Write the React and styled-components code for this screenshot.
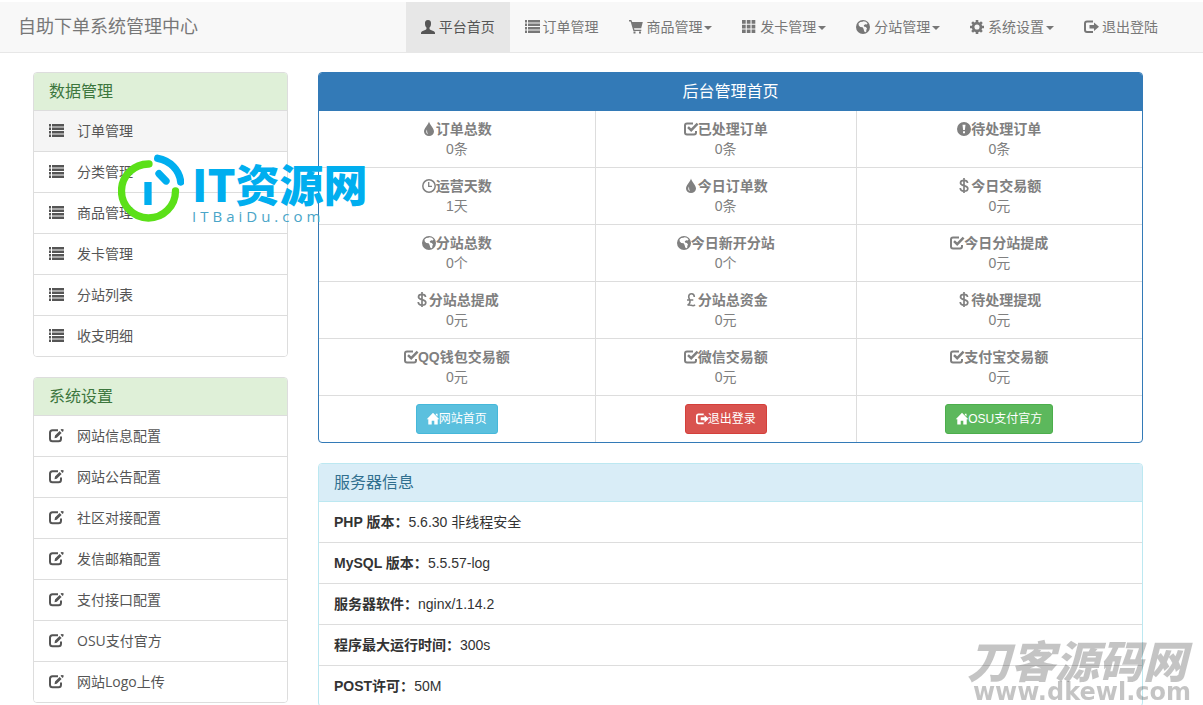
import React from 'react'
import styled, { createGlobalStyle, css } from 'styled-components';

const icons = {
    user: <path d="M7 0C4.700 0 3.800 1.600 4 3.900C4.100 5.500 4.700 6.800 5.500 7.500V8.700C5.500 9.200 5.200 9.500 4.700 9.700L1.200 11.300C.4 11.700 0 12.300 0 13V14H14V13C14 12.300 13.600 11.700 12.800 11.300L9.300 9.700C8.800 9.500 8.500 9.200 8.500 8.700V7.500C9.300 6.800 9.900 5.500 10 3.900C10.200 1.600 9.300 0 7 0z" />,
    list: <path d="M0 0h2v2.500H0zM3 0h12v2.500H3zM0 3.500h2V6H0zM3 3.500h12V6H3zM0 7h2v2.500H0zM3 7h12v2.500H3zM0 10.500h2V13H0zM3 10.500h12V13H3z" />,
    cart: <path d="M0 0H2.300L3.200 2H13.800L12.200 8.300H5L5.400 9.700H12.300V11H4.400L1.600 1.500H0zM4.500 11.500h2v2h-2zM10 11.500h2v2h-2z" />,
    th: <path d="M0 0h3.700v3.700H0zM4.800 0h3.700v3.700H4.800zM9.600 0h3.700v3.700H9.600zM0 4.700h3.700v3.700H0zM4.800 4.700h3.700v3.700H4.800zM9.600 4.700h3.700v3.700H9.600zM0 9.400h3.700v3.700H0zM4.800 9.400h3.700v3.700H4.800zM9.600 9.400h3.700v3.700H9.600z" />,
    globe: (
        <path
            fillRule="evenodd"
            d="M7 0a7 7 0 1 1 0 14A7 7 0 0 1 7 0zM7.700 1.300L6.400 1.800 4.300 2 2.500 3.600 2.800 5.500 4.300 6.900 6.600 7.300 7.500 8.700 8.300 11.500 9.200 12.300A5.800 5.800 0 0 0 10.300 11.500L10.300 9.900 11 8.500 9.900 7 8 6.600 7.800 5.300 9.400 4.300 10.900 4.400 11.500 3.300A5.800 5.800 0 0 0 7.700 1.300z"
        />
    ),
    cog: (
        <g fill="none" stroke="currentColor">
            <circle cx="7" cy="7" r="3.9" strokeWidth="2.7" />
            <path strokeWidth="2.6" d="M7 0v2.500M7 11.500V14M0 7h2.500M11.500 7H14M2.100 2.100l1.700 1.700M10.200 10.200l1.700 1.700M2.100 11.900l1.700-1.700M10.200 3.800l1.700-1.700" />
        </g>
    ),
    logout: (
        <g>
            <path fill="none" stroke="currentColor" strokeWidth="2" d="M9 1.500H3Q1 1.500 1 3.500V10Q1 12 3 12H9" />
            <path d="M5.500 5H10V2.500L15 6.800 10 11V8.500H5.500z" />
        </g>
    ),
    tint: <path fillRule="evenodd" d="M7 -.5C6.300 3 2 6.200 2 9.400A5 4.600 0 0 0 12 9.400C12 6.200 7.700 3 7 -.5zM5 7.400C3.700 9.500 4.300 11.400 6 12.200 5.300 10.900 5 9.400 5 7.400z" />,
    check: (
        <g fill="none" stroke="currentColor" strokeWidth="2">
            <path d="M9 1.500H3Q1 1.500 1 3.500V10.500Q1 12.500 3 12.500H10Q12 12.500 12 10.500V9" />
            <path strokeWidth="2.500" d="M4 5.200L7.200 8.200 13.600 1.600" />
        </g>
    ),
    exclamation: <path fillRule="evenodd" d="M7 0a7 7 0 1 1 0 14A7 7 0 0 1 7 0zM5.500 2.800L6.100 8H7.900L8.500 2.800zM6 9.300v2h2v-2z" />,
    time: (
        <g fill="none" stroke="currentColor">
            <circle cx="7" cy="7" r="6.200" strokeWidth="1.500" />
            <path strokeWidth="1.300" d="M6.700 3V7.300H10" />
        </g>
    ),
    usd: <path fill="none" stroke="currentColor" strokeWidth="1.700" d="M7 -1V14M10.600 4C10.400 2.100 9 1.300 7 1.300 5 1.300 3.500 2.300 3.500 3.900 3.500 7.500 10.800 5.700 10.800 9.400 10.800 11.300 9.200 12.100 7 12.100 4.800 12.100 3.400 11.300 3.200 9" />,
    gbp: <path fill="none" stroke="currentColor" strokeWidth="1.600" d="M10.300 4C10.300 1.700 9.300 .7 7.600 .7 5.700 .7 4.700 2.100 4.700 3.700 4.700 5.500 6 6.500 6 8.500 6 10.300 5.200 11.400 3.500 12.200 5.800 11.300 7.200 12.700 9 12.700 9.900 12.700 10.500 12.300 11 11.700M3 7H9.300" />,
    edit: (
        <g>
            <path fill="none" stroke="currentColor" strokeWidth="2" d="M9 1.200H3.500Q1 1.200 1 3.700V9.700Q1 12.200 3.500 12.200H9.500Q12 12.200 12 9.700V7.500" />
            <path d="M10.600 1.900L12.600 3.900 7.800 8.700 5.500 9.300 6 6.500zM11.500 .8L12.500 -.1 14.600 .2 14.500 2 13.500 3z" />
        </g>
    ),
    home: <path d="M7 -.3L14.300 7.300H12.500V13.500H8.500V9H5.500V13.500H1.500V7.300H-.3zM10.300 1H12.300V4L10.300 2z" />,
};

const navItems = [
    { icon: 'user', text: '平台首页', active: true },
    { icon: 'list', text: '订单管理' },
    { icon: 'cart', text: '商品管理', dropdown: true },
    { icon: 'th', text: '发卡管理', dropdown: true },
    { icon: 'globe', text: '分站管理', dropdown: true },
    { icon: 'cog', text: '系统设置', dropdown: true },
    { icon: 'logout', text: '退出登陆' },
];

const dataMenu = ['订单管理', '分类管理', '商品管理', '发卡管理', '分站列表', '收支明细'];
const settingMenu = ['网站信息配置', '网站公告配置', '社区对接配置', '发信邮箱配置', '支付接口配置', 'OSU支付官方', '网站Logo上传'];

const stats = [
    [['tint', '订单总数', '0条'], ['check', '已处理订单', '0条'], ['exclamation', '待处理订单', '0条']],
    [['time', '运营天数', '1天'], ['tint', '今日订单数', '0条'], ['usd', '今日交易额', '0元']],
    [['globe', '分站总数', '0个'], ['globe', '今日新开分站', '0个'], ['check', '今日分站提成', '0元']],
    [['usd', '分站总提成', '0元'], ['gbp', '分站总资金', '0元'], ['usd', '待处理提现', '0元']],
    [['check', 'QQ钱包交易额', '0元'], ['check', '微信交易额', '0元'], ['check', '支付宝交易额', '0元']],
];

const serverInfo = [
    ['PHP 版本：', '5.6.30 非线程安全'],
    ['MySQL 版本：', '5.5.57-log'],
    ['服务器软件：', 'nginx/1.14.2'],
    ['程序最大运行时间：', '300s'],
    ['POST许可：', '50M'],
];

function Icon({ name, size = 14 }) {
    return (
        <IconStyled viewBox="0 0 14 14" $size={size} aria-hidden="true">
            {icons[name]}
        </IconStyled>
    );
}

function SideMenu({ title, icon, items, activeIndex }) {
    return (
        <Panel>
            <PanelHeading $variant="success">{title}</PanelHeading>
            {items.map((item, i) => (
                <MenuLink href="#" key={item} $active={i === activeIndex}>
                    <Icon name={icon} />
                    {item}
                </MenuLink>
            ))}
        </Panel>
    );
}

function App() {
    return (
        <Page>
            <GlobalStyle />
            <Navbar>
                <Container>
                    <Brand href="#">自助下单系统管理中心</Brand>
                    <NavList>
                        {navItems.map((item) => (
                            <li key={item.text}>
                                <NavLink href="#" $active={item.active}>
                                    <Icon name={item.icon} /> {item.text}
                                    {item.dropdown && <Caret />}
                                </NavLink>
                            </li>
                        ))}
                    </NavList>
                </Container>
            </Navbar>
            <Container>
                <Sidebar>
                    <SideMenu title="数据管理" icon="list" items={dataMenu} activeIndex={0} />
                    <SideMenu title="系统设置" icon="edit" items={settingMenu} />
                </Sidebar>
                <Main>
                    <Panel $variant="primary">
                        <PanelHeading $variant="primary">后台管理首页</PanelHeading>
                        <StatTable>
                            <colgroup>
                                <StatCol $width="33.5%" />
                                <StatCol $width="31.7%" />
                                <StatCol $width="34.8%" />
                            </colgroup>
                            <tbody>
                                {stats.map((row, i) => (
                                    <tr key={i}>
                                        {row.map(([icon, label, value]) => (
                                            <StatCell key={label}>
                                                <b><Icon name={icon} />{label}</b>
                                                <span>{value}</span>
                                            </StatCell>
                                        ))}
                                    </tr>
                                ))}
                                <tr>
                                    <StatCell>
                                        <Button href="#" $variant="info"><Icon name="home" size={12} />网站首页</Button>
                                    </StatCell>
                                    <StatCell>
                                        <Button href="#" $variant="danger"><Icon name="logout" size={12} />退出登录</Button>
                                    </StatCell>
                                    <StatCell>
                                        <Button href="#" $variant="success"><Icon name="home" size={12} />OSU支付官方</Button>
                                    </StatCell>
                                </tr>
                            </tbody>
                        </StatTable>
                    </Panel>
                    <Panel $variant="info">
                        <PanelHeading $variant="info">服务器信息</PanelHeading>
                        <InfoList>
                            {serverInfo.map(([label, value]) => (
                                <li key={label}><b>{label}</b>{value}</li>
                            ))}
                        </InfoList>
                    </Panel>
                </Main>
            </Container>
            <SiteLogo>
                <svg width="66" height="70" viewBox="0 0 66 70" fill="none" strokeWidth="7.300" strokeLinecap="round" aria-hidden="true">
                    <path stroke="#5be018" d="M31 11A27 27 0 1 0 57.500 38" />
                    <path stroke="#00aeef" d="M39.700 5.300C52 7.500 61.500 17 62.700 29" />
                    <path stroke="#00aeef" d="M41 20.700L48 28" />
                    <path stroke="#00aeef" strokeLinecap="butt" d="M30 29V52" />
                </svg>
                <LogoText>
                    <strong>IT资源网</strong>
                    <span>ITBaiDu.com</span>
                </LogoText>
            </SiteLogo>
            <Watermark>
                <strong>刀客源码网</strong>
                <span>www.dkewl.com</span>
            </Watermark>
        </Page>
    );
}

const GlobalStyle = createGlobalStyle`
    * {
        box-sizing: border-box;
    }

    html {
        scrollbar-width: none;
    }

    body {
        margin: 0;
        background: #fff;
        color: #333;
        font: 14px/20px "Liberation Sans", "Noto Sans CJK SC", sans-serif;
    }

    a {
        text-decoration: none;
    }
`;

const panelColors = {
    default: { border: '#ddd', background: '#f5f5f5', color: '#333' },
    primary: { border: '#337ab7', background: '#337ab7', color: '#fff' },
    success: { border: '#ddd', background: '#dff0d8', color: '#3c763d' },
    info: { border: '#bce8f1', background: '#d9edf7', color: '#31708f' },
};

const buttonColors = {
    info: { border: '#46b8da', background: '#5bc0de' },
    danger: { border: '#d43f3a', background: '#d9534f' },
    success: { border: '#4cae4c', background: '#5cb85c' },
};

const Page = styled.div`
    position: relative;
    padding-top: 2px;
`;

const IconStyled = styled.svg`
    width: ${(p) => p.$size}px;
    height: ${(p) => p.$size}px;
    flex: none;
    fill: currentColor;
    vertical-align: -2px;
    overflow: visible;
`;

const Container = styled.div`
    display: flex;
    margin: 0 30px 0 3px;
    padding: 0 15px;
`;

const Navbar = styled.nav`
    margin-bottom: 19px;
    background: #f8f8f8;
    border-bottom: 1px solid #e7e7e7;

    ${Container} {
        justify-content: space-between;
        padding-right: 0;
    }
`;

const Brand = styled.a`
    padding: 15px 0;
    font-size: 18px;
    color: #777;
`;

const NavList = styled.ul`
    display: flex;
    margin: 0;
    padding: 0;
    list-style: none;
`;

const NavLink = styled.a`
    display: block;
    padding: 15px;
    white-space: nowrap;
    color: #777;

    ${(p) => p.$active && css`
        color: #555;
        background: #e7e7e7;
    `}
`;

const Caret = styled.span`
    display: inline-block;
    margin-left: 2px;
    vertical-align: middle;
    border-top: 4px solid;
    border-right: 4px solid transparent;
    border-left: 4px solid transparent;
`;

const Sidebar = styled.aside`
    flex: 0 0 25%;
    padding: 0 15px;
`;

const Main = styled.main`
    flex: 1;
    min-width: 0;
    padding: 0 15px;
`;

const Panel = styled.section`
    margin-bottom: 20px;
    border: 1px solid ${(p) => panelColors[p.$variant || 'default'].border};
    border-radius: 4px;
    overflow: hidden;
`;

const PanelHeading = styled.h3`
    margin: 0;
    padding: 10px 15px;
    font-size: 16px;
    font-weight: 400;
    line-height: 17px;
    text-align: ${(p) => (p.$variant === 'primary' ? 'center' : 'left')};
    color: ${(p) => panelColors[p.$variant].color};
    background: ${(p) => panelColors[p.$variant].background};
    border-bottom: 1px solid ${(p) => panelColors[p.$variant].border};
`;

const MenuLink = styled.a`
    display: flex;
    align-items: center;
    gap: 14px;
    padding: 10px 15px;
    font-family: "Open Sans", "Noto Sans CJK SC", sans-serif;
    color: #555;
    background: ${(p) => (p.$active ? '#f5f5f5' : '#fff')};

    & + & {
        border-top: 1px solid #ddd;
    }
`;

const StatTable = styled.table`
    width: 100%;
    table-layout: fixed;
    border-collapse: separate;
    border-spacing: 0;
`;

const StatCol = styled.col`
    width: ${(p) => p.$width};
`;

const StatCell = styled.td`
    padding: 8px;
    text-align: center;
    color: #808080;

    b, span {
        display: block;
    }

    & + & {
        border-left: 1px solid #ddd;
    }

    tr + tr & {
        border-top: 1px solid #ddd;
    }
`;

const Button = styled.a`
    display: inline-block;
    padding: 5px 10px;
    font-size: 12px;
    line-height: 18px;
    vertical-align: top;
    border-radius: 3px;
    color: #fff;
    background: ${(p) => buttonColors[p.$variant].background};
    border: 1px solid ${(p) => buttonColors[p.$variant].border};
`;

const InfoList = styled.ul`
    margin: 0;
    padding: 0;
    list-style: none;

    li {
        padding: 10px 15px;
    }

    li + li {
        border-top: 1px solid #ddd;
    }
`;

const SiteLogo = styled.div`
    position: absolute;
    top: 153px;
    left: 118px;
    display: flex;
    gap: 8px;
    pointer-events: none;
`;

const LogoText = styled.div`
    display: flex;
    flex-direction: column;
    padding-top: 8px;
    white-space: nowrap;

    strong {
        font: 900 44px/44px "Noto Sans CJK SC", sans-serif;
        color: #00aeef;
    }

    span {
        font: 15px/22px "Open Sans", sans-serif;
        letter-spacing: 4px;
        color: #4aa5c8;
    }
`;

const Watermark = styled.div`
    position: fixed;
    right: 12px;
    bottom: 2px;
    display: flex;
    flex-direction: column;
    align-items: flex-end;
    white-space: nowrap;
    color: rgba(0, 0, 0, .23);
    pointer-events: none;

    strong {
        padding-right: 4px;
        font-family: "Noto Sans CJK SC", sans-serif;
        font-style: italic;
        font-weight: 900;
        font-size: 44px;
        line-height: 44px;
    }

    span {
        font-family: "DejaVu Sans", sans-serif;
        font-weight: 700;
        font-size: 24px;
        line-height: 22px;
    }
`;

export default App;
